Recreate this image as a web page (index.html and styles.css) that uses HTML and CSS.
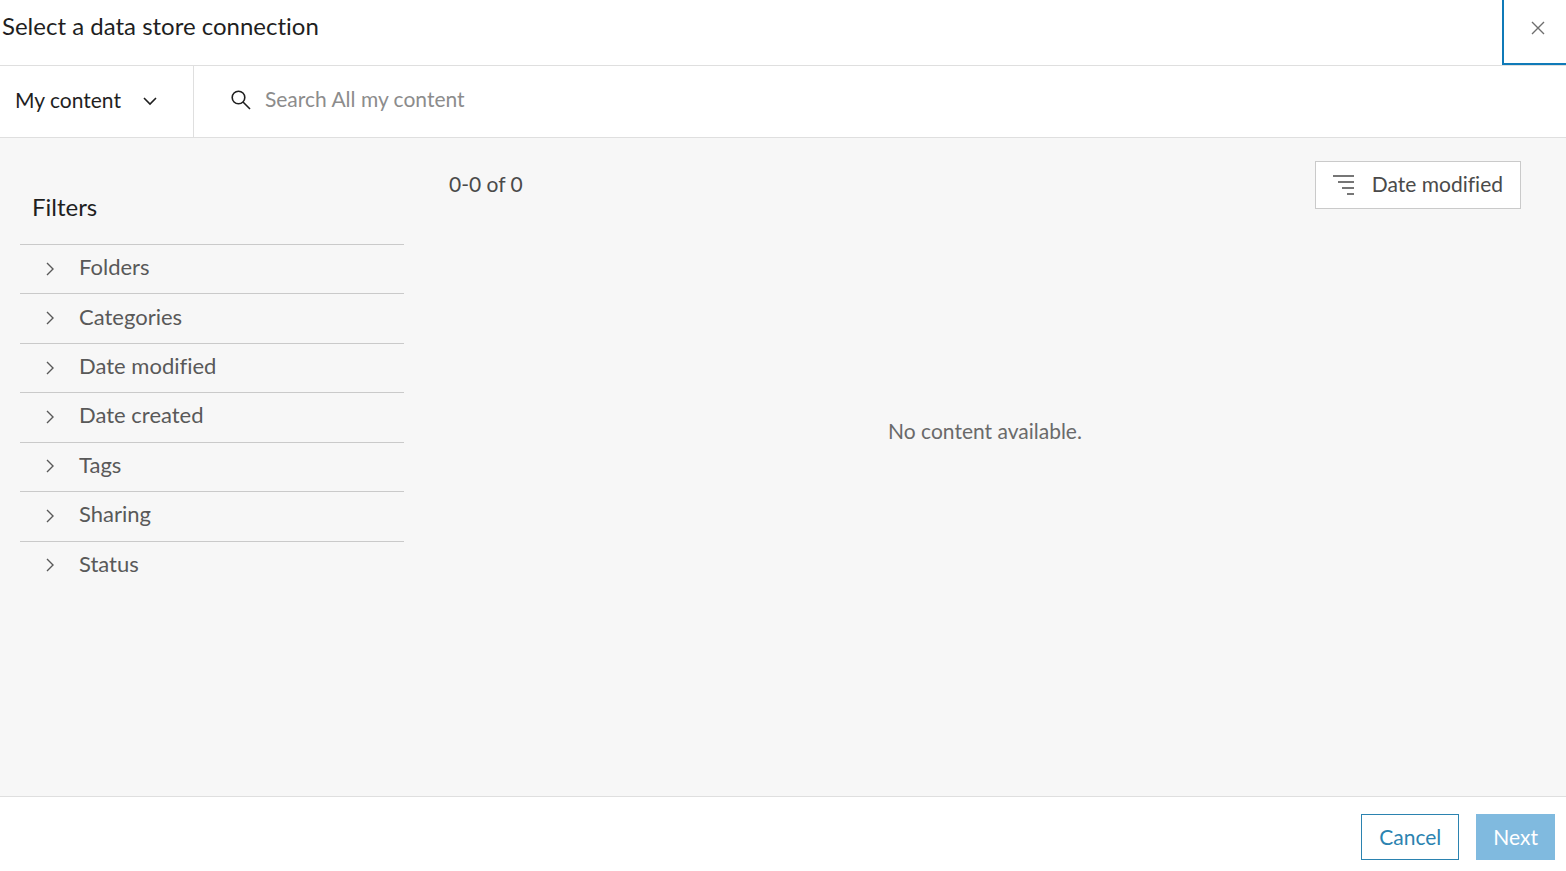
FILE: index.html
```html
<!DOCTYPE html>
<html lang="en">
<head>
    <meta charset="UTF-8">
    <meta name="viewport" content="width=device-width, initial-scale=1.0">
    <title>Select a data store connection</title>
    <link rel="stylesheet" href="styles.css">
</head>
<body>
    <header class="header">
        <h1>Select a data store connection</h1>
        <button type="button" class="close" aria-label="Close">
            <svg width="14" height="14" viewBox="0 0 14 14"><path d="M1 1l12 12M13 1L1 13"/></svg>
        </button>
    </header>

    <div class="toolbar">
        <button type="button" class="scope">
            My content
            <svg width="14" height="14" viewBox="0 0 14 14"><path d="M1 5l6 6 6-6"/></svg>
        </button>
        <div class="search">
            <label for="search" aria-label="Search">
                <svg width="20" height="20" viewBox="0 0 20 20"><circle cx="7.5" cy="7.5" r="6.3"/><path d="M12 12l7 7"/></svg>
            </label>
            <input type="text" id="search" name="search" placeholder="Search All my content">
        </div>
    </div>

    <main class="content">
        <aside class="filters">
            <h2>Filters</h2>
            <ul>
                <li><button type="button"><svg width="8" height="14" viewBox="0 0 8 14"><path d="M1 1l6 6-6 6"/></svg>Folders</button></li>
                <li><button type="button"><svg width="8" height="14" viewBox="0 0 8 14"><path d="M1 1l6 6-6 6"/></svg>Categories</button></li>
                <li><button type="button"><svg width="8" height="14" viewBox="0 0 8 14"><path d="M1 1l6 6-6 6"/></svg>Date modified</button></li>
                <li><button type="button"><svg width="8" height="14" viewBox="0 0 8 14"><path d="M1 1l6 6-6 6"/></svg>Date created</button></li>
                <li><button type="button"><svg width="8" height="14" viewBox="0 0 8 14"><path d="M1 1l6 6-6 6"/></svg>Tags</button></li>
                <li><button type="button"><svg width="8" height="14" viewBox="0 0 8 14"><path d="M1 1l6 6-6 6"/></svg>Sharing</button></li>
                <li><button type="button"><svg width="8" height="14" viewBox="0 0 8 14"><path d="M1 1l6 6-6 6"/></svg>Status</button></li>
            </ul>
        </aside>

        <section class="results">
            <div class="results-bar">
                <span class="count">0-0 of 0</span>
                <button type="button" class="sort">
                    <svg width="22" height="22" viewBox="0 0 22 22"><path d="M0 2h21M5 8h16M9 14h12M14 20h7"/></svg>
                    Date modified
                </button>
            </div>
            <p class="empty">No content available.</p>
        </section>
    </main>

    <footer class="footer">
        <button type="button" class="btn">Cancel</button>
        <button type="button" class="btn btn-primary" disabled>Next</button>
    </footer>
</body>
</html>
```

FILE: styles.css
```css
* {
    box-sizing: border-box;
}
body {
    margin: 0;
    min-height: 100vh;
    display: flex;
    flex-direction: column;
    font-family: Lato, sans-serif;
    font-size: 21px;
    font-variant-ligatures: none;
    line-height: 28px;
    color: #1f1f1f;
    background: #fff;
}
h1, h2 {
    margin: 0;
    font-size: 24px;
    font-weight: 400;
}
button, input {
    font: inherit;
    font-variant-ligatures: none;
    color: inherit;
    background: none;
    border: none;
    border-radius: 0;
    padding: 0;
}
button {
    cursor: pointer;
}
svg {
    display: block;
    flex: none;
    fill: none;
    stroke: currentColor;
    stroke-width: 1.6;
}
.header {
    display: flex;
    justify-content: space-between;
    height: 66px;
    border-bottom: 1px solid #dfdfdf;
}
.header h1 {
    padding: 12px 2px;
}
.close {
    display: flex;
    align-items: center;
    justify-content: center;
    width: 64px;
    height: 65px;
    padding: 0 0 7px 6px;
    border-left: 2px solid #0f7ab8;
    border-bottom: 2px solid #0f7ab8;
    color: #6e6e6e;
}
.close svg {
    stroke-width: 1.4;
}
.toolbar {
    display: flex;
    height: 72px;
    border-bottom: 1px solid #dfdfdf;
}
.scope {
    display: flex;
    align-items: center;
    gap: 22px;
    padding: 0 36px 4px 15px;
    border-right: 1px solid #dfdfdf;
}
.search {
    flex: 1;
    display: flex;
    align-items: center;
    gap: 14px;
    padding: 0 37px 5px;
}
.search input {
    flex: 1;
    outline: none;
}
.search label {
    padding-top: 2px;
}
.search input::placeholder {
    color: #8c8c8c;
    opacity: 1;
}
.content {
    flex: 1;
    display: flex;
    background: #f7f7f7;
}
.filters {
    width: 404px;
    padding: 55px 0 0 20px;
}
.filters h2 {
    padding: 0 12px 23px;
}
.filters ul {
    display: grid;
    grid-auto-rows: 1fr;
    min-height: 346px;
    margin: 0;
    padding: 0;
    list-style: none;
}
.filters li {
    display: flex;
    border-top: 1px solid #cacaca;
}
.filters button {
    flex: 1;
    display: flex;
    align-items: center;
    gap: 25px;
    padding: 0 26px 4px;
    font-size: 22px;
    color: #595959;
}
.filters svg {
    margin-top: 3px;
    stroke-width: 1.4;
}
.results {
    flex: 1;
    display: flex;
    flex-direction: column;
    padding: 23px 45px;
}
.results-bar {
    display: flex;
    justify-content: space-between;
    align-items: center;
    color: #4a4a4a;
}
.count {
    padding-bottom: 2px;
}
.sort {
    display: flex;
    align-items: center;
    gap: 17px;
    height: 48px;
    padding: 0 17px 2px;
    border: 1px solid #cacaca;
    background: #fff;
}
.sort svg {
    margin-top: 2px;
}
.empty {
    margin: 208px 0 0;
    text-align: center;
    color: #6a6a6a;
}
.footer {
    display: flex;
    justify-content: flex-end;
    gap: 17px;
    padding: 17px 11px 11px;
    border-top: 1px solid #dfdfdf;
}
.btn {
    height: 46px;
    padding: 0 17px;
    border: 1px solid #2b83b0;
    color: #2b83b0;
}
.btn-primary {
    padding: 0 16px;
    border-color: #80badf;
    background: #80badf;
    color: #fff;
}
```
